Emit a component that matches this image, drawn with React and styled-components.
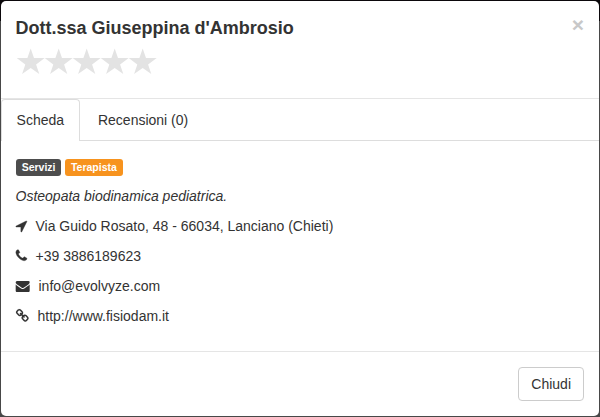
import React from "react";
import styled, { createGlobalStyle } from "styled-components";

const GlobalStyle = createGlobalStyle`
  * {
    box-sizing: border-box;
  }
  body {
    margin: 0;
    overflow: hidden;
    background: linear-gradient(#0b080b 21px, #484848 21px);
    color: #333333;
    font-family: "Liberation Sans", Arial, sans-serif;
    font-size: 14px;
    line-height: 20px;
  }
`;

const Backdrop = styled.div`
  width: 600px;
  height: 417px;
  padding: 1px;
`;

const Modal = styled.div`
  display: flex;
  flex-direction: column;
  height: 415px;
  border-radius: 5px;
  background-color: #ffffff;
`;

const Header = styled.div`
  display: flex;
  justify-content: space-between;
  height: 98px;
  padding: 15px 15px 0 14.5px;
  border-bottom: 1px solid #e5e5e5;
`;

const Title = styled.h4`
  margin: 0;
  font-size: 18px;
  font-weight: bold;
  line-height: 25px;
`;

const Stars = styled.div`
  display: flex;
  margin-top: 7px;
  padding-left: 1px;
`;

const Star = styled.svg`
  display: block;
  width: 28px;
  height: 28px;
  overflow: visible;
  fill: #e3e3e3;
`;

const Close = styled.button`
  align-self: flex-start;
  margin-top: -2px;
  padding: 0;
  border: 0;
  background: none;
  color: #c8c8c8;
  font-family: inherit;
  font-size: 21px;
  font-weight: bold;
  line-height: 21px;
`;

const Tabs = styled.div`
  display: flex;
  gap: 2px;
  height: 42px;
  border-bottom: 1px solid #dddddd;
`;

const Tab = styled.div`
  height: 42px;
  padding: 10px 15.3px 10px 14.6px;
  border: 1px solid ${({ $active }) => ($active ? "#dddddd" : "transparent")};
  border-bottom: 0;
  border-radius: 4px 4px 0 0;
  background-color: ${({ $active }) => ($active ? "#ffffff" : "transparent")};
`;

const Body = styled.div`
  flex: 1;
  padding: 15px 15px 0 14.5px;
`;

const Labels = styled.div`
  display: flex;
  gap: 4px;
  margin: 3px 0 10px 0.5px;
`;

const Label = styled.span`
  height: 17px;
  padding: 0 5.7px;
  border-radius: 3px;
  background-color: ${({ $color }) => $color};
  color: #ffffff;
  font-size: 10.5px;
  font-weight: bold;
  line-height: 17px;
`;

const Text = styled.p`
  margin: 0 0 10px;
`;

const Row = styled(Text)`
  display: flex;
  align-items: center;
  gap: 9px;
`;

const Icon = styled.svg`
  height: 14px;
  overflow: visible;
  fill: currentColor;
  stroke: currentColor;
  stroke-width: ${({ $stroke }) => $stroke};
`;

const Footer = styled.div`
  display: flex;
  justify-content: flex-end;
  padding: 15px;
  border-top: 1px solid #e5e5e5;
`;

const Button = styled.button`
  height: 34px;
  padding: 6px 12px;
  border: 1px solid #cccccc;
  border-radius: 4px;
  background-color: #ffffff;
  color: #333333;
  font-family: inherit;
  font-size: 14px;
  line-height: 20px;
`;

const contacts = [
  {
    text: "Via Guido Rosato, 48 - 66034, Lanciano (Chieti)",
    width: 11,
    stroke: 50,
    viewBox: "210 0 1408 1792",
    path: "M1593 349l-640 1280q-17 35-57 35-5 0-15-2-22-5-35.5-22.5t-13.5-39.5v-576h-576q-22 0-39.5-13.5t-22.5-35.5 4-42 29-30l1280-640q13-7 29-7 27 0 45 19 15 14 18.5 34.5t-6.5 39.5z",
  },
  {
    text: "+39 3886189623",
    width: 11,
    stroke: 40,
    viewBox: "210 40 1408 1792",
    path: "M1600 1240q0 27-10 70.5t-21 68.5q-21 50-122 106-94 51-186 51-27 0-53-3.5t-57-12.5-47-14.5-55.5-20.5-49.5-18q-98-35-175-83-127-79-264-216t-216-264q-48-77-83-175-3-9-18-49.5t-20.5-55.5-14.5-47-12.5-57-3.5-53q0-92 51-186 56-101 106-122 25-11 68.5-21t70.5-10q14 0 21 3 18 6 53 76 11 19 30 54t35 63.5 31 53.5q3 4 17.5 25t21.5 35.5 7 28.5q0 20-28.5 50t-62 55-62 53-28.5 46q0 9 5 22.5t8.5 20.5 14 24 11.5 19q76 137 174 235t235 174q2 1 19 11.5t24 14 20.5 8.5 22.5 5q18 0 46-28.5t53-62 55-62 50-28.5q14 0 28.5 7t35.5 21.5 25 17.5q25 15 53.5 31t63.5 35 54 30q70 35 76 53 3 7 3 21z",
  },
  {
    text: "info@evolvyze.com",
    width: 14,
    stroke: 0,
    viewBox: "40 0 1792 1792",
    path: "M1792 710v794q0 66-47 113t-113 47h-1472q-66 0-113-47t-47-113v-794q44 49 101 87 362 246 497 345 57 42 92.5 65.5t94.5 48 110 24.5h2q51 0 110-24.5t94.5-48 92.5-65.5q170-123 498-345 57-39 100-87zm0-294q0 79-49 151t-122 123q-376 261-468 325-10 7-42.5 31t-54 38.5-52 32.5-57.5 27-50 9h-2q-23 0-50-9t-57.5-27-52-32.5-54-38.5-42.5-31q-91-64-262-182.5t-205-142.5q-62-42-117-115.5t-55-136.5q0-78 41.5-130t118.5-52h1472q65 0 112.5 47t47.5 113z",
  },
  {
    text: "http://www.fisiodam.it",
    width: 13,
    stroke: 10,
    viewBox: "90 30 1664 1792",
    path: "M1520 1216q0-40-28-68l-208-208q-28-28-68-28-42 0-72 32 3 3 19 18.5t21.5 21.5 15 19 13 25.5 3.5 27.5q0 40-28 68t-68 28q-15 0-27.5-3.5t-25.5-13-19-15-21.5-21.5-18.5-19q-33 31-33 73 0 40 28 68l206 207q27 27 68 27 40 0 68-26l147-146q28-28 28-67zm-703-705q0-40-28-68l-206-207q-28-28-68-28-39 0-68 27l-147 146q-28 28-28 67 0 40 28 68l208 208q27 27 68 27 42 0 72-31-3-3-19-18.5t-21.5-21.5-15-19-13-25.5-3.5-27.5q0-40 28-68t68-28q15 0 27.5 3.5t25.5 13 19 15 21.5 21.5 18.5 19q33-31 33-73zm895 705q0 120-85 203l-147 146q-83 83-203 83-121 0-204-85l-206-207q-83-83-83-203 0-123 88-209l-88-88q-86 88-208 88-120 0-204-84l-208-208q-84-84-84-204t85-203l147-146q83-83 203-83 121 0 204 85l206 207q83 83 83 203 0 123-88 209l88 88q86-88 208-88 120 0 204 84l208 208q84 84 84 204z",
  },
];

const App = () => {
  return (
    <Backdrop>
      <GlobalStyle />
      <Modal>
        <Header>
          <div>
            <Title>Dott.ssa Giuseppina d'Ambrosio</Title>
            <Stars>
              {[1, 2, 3, 4, 5].map((n) => (
                <Star key={n} viewBox="0.3 0 28 28">
                  <path d="M14 .5l3.3 9.4H28l-8.6 6.5 3.2 9.7-8.6-6-8.6 6 3.2-9.7L0 9.9h10.7z" />
                </Star>
              ))}
            </Stars>
          </div>
          <Close>×</Close>
        </Header>
        <Tabs>
          <Tab $active>Scheda</Tab>
          <Tab>Recensioni (0)</Tab>
        </Tabs>
        <Body>
          <Labels>
            <Label $color="#4d4d4d">Servizi</Label>
            <Label $color="#f7931e">Terapista</Label>
          </Labels>
          <Text>
            <em>Osteopata biodinamica pediatrica.</em>
          </Text>
          {contacts.map(({ text, width, stroke, viewBox, path }) => (
            <Row key={text}>
              <Icon width={width} viewBox={viewBox} $stroke={stroke}>
                <path d={path} />
              </Icon>
              {text}
            </Row>
          ))}
        </Body>
        <Footer>
          <Button>Chiudi</Button>
        </Footer>
      </Modal>
    </Backdrop>
  );
};

export default App;
